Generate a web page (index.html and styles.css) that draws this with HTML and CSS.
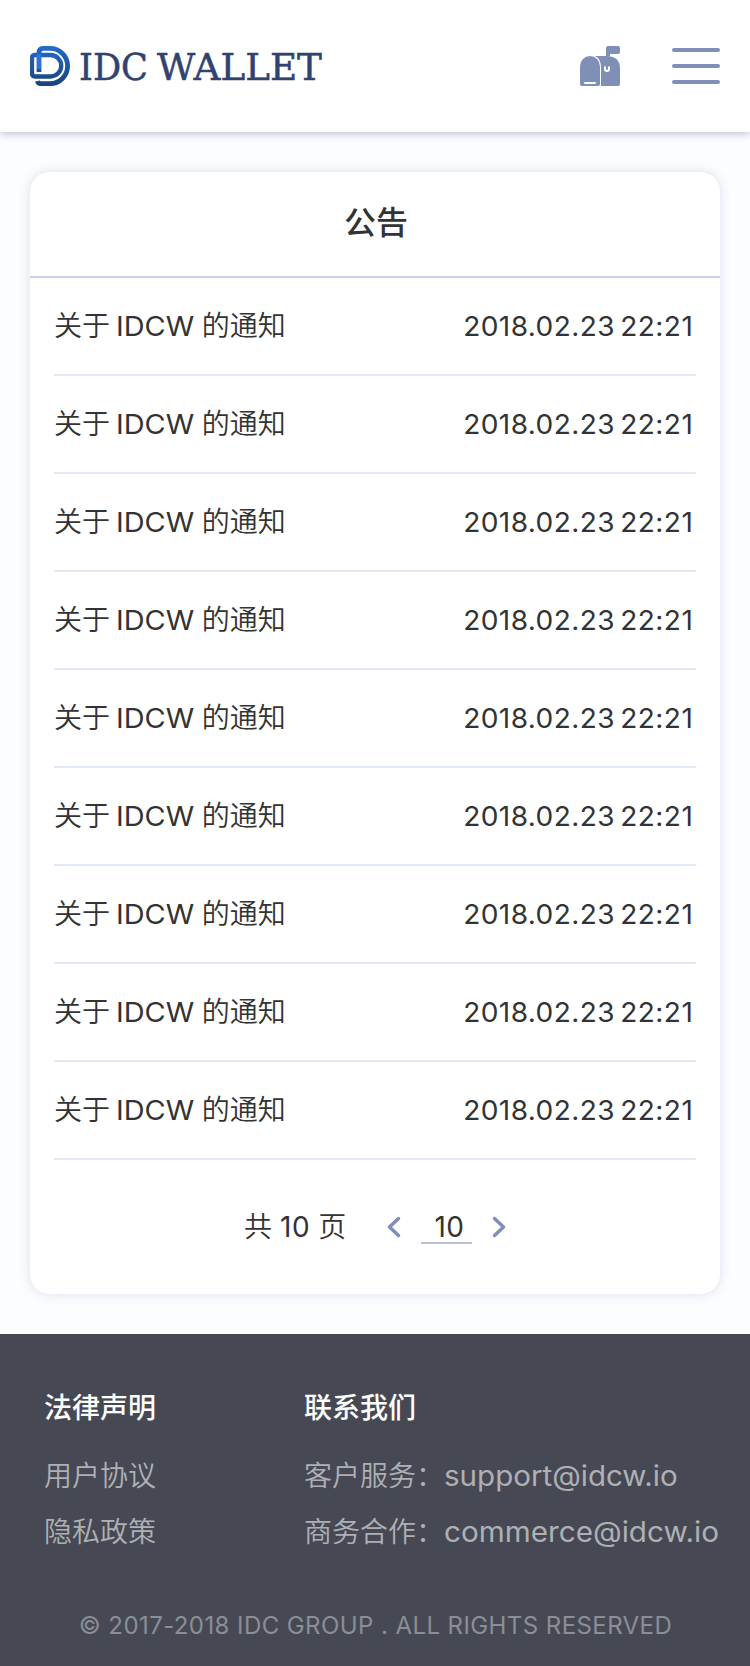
FILE: index.html
```html
<!DOCTYPE html>
<html lang="zh-CN">
<head>
<meta charset="utf-8">
<title>IDC WALLET</title>
<link rel="stylesheet" href="styles.css">
</head>
<body>
<header class="topbar">
  <svg class="brand" width="296" height="44" viewBox="0 0 296 44">
    <defs><linearGradient id="g" gradientUnits="userSpaceOnUse" x1="0" y1="2" x2="0" y2="42"><stop offset="0" stop-color="#246bca"/><stop offset="1" stop-color="#1a427b"/></linearGradient></defs>
    <g fill="none" stroke="url(#g)" stroke-width="4.300">
      <path stroke-width="4.800" d="M9 28V8.400Q9 4.400 13 4.400H20A17.600 17.600 0 0 1 20 39.600H11Q8 39.600 7.500 37"/>
      <path d="M16 11H5Q2 11 2 14V29Q2 32.500 5.500 32.500H20.500A10.750 10.750 0 0 0 20.500 11H14"/>
    </g>
    <path d="M7 10h4v15H7z" fill="#2d73db"/>
    <g class="brand-name">
      <text x="49" y="35.500" textLength="69" lengthAdjust="spacingAndGlyphs">IDC</text>
      <text x="127" y="35.500" textLength="165" lengthAdjust="spacingAndGlyphs">WALLET</text>
    </g>
  </svg>
  <div class="actions">
    <svg width="40" height="40" viewBox="0 0 40 40">
      <path d="M28 10V0H38Q40 0 40 2V6Q40 8 38 8H28V10Q40 11 40 22V38Q40 40 38 40H21V21Q21 13 15 10H26V2Q26 0 28 0H30V10Z" fill="#7e8fb8"/>
      <path d="M0 20.500A10 10.500 0 0 1 20 20.500V38Q20 40 18 40H2Q0 40 0 38Z" fill="#7e8fb8"/>
      <path d="M5 37H15" stroke="#fff" stroke-width="2" stroke-linecap="round"/>
      <path d="M25 20.500V23A2 2 0 0 0 29 23V20.500" fill="none" stroke="#fff" stroke-width="2"/>
    </svg>
    <svg width="48" height="36" viewBox="0 0 48 36"><path d="M2 2H46M2 18H46M2 34H46" stroke="#7e8fb8" stroke-width="4" stroke-linecap="round"/></svg>
  </div>
</header>
<main class="card">
  <h1 class="card-title">公告</h1>
  <ul class="list">
    <li class="row"><span>关于 <span class="code">IDCW</span> 的通知</span><time class="date">2018.02.23 22:21</time></li>
    <li class="row"><span>关于 <span class="code">IDCW</span> 的通知</span><time class="date">2018.02.23 22:21</time></li>
    <li class="row"><span>关于 <span class="code">IDCW</span> 的通知</span><time class="date">2018.02.23 22:21</time></li>
    <li class="row"><span>关于 <span class="code">IDCW</span> 的通知</span><time class="date">2018.02.23 22:21</time></li>
    <li class="row"><span>关于 <span class="code">IDCW</span> 的通知</span><time class="date">2018.02.23 22:21</time></li>
    <li class="row"><span>关于 <span class="code">IDCW</span> 的通知</span><time class="date">2018.02.23 22:21</time></li>
    <li class="row"><span>关于 <span class="code">IDCW</span> 的通知</span><time class="date">2018.02.23 22:21</time></li>
    <li class="row"><span>关于 <span class="code">IDCW</span> 的通知</span><time class="date">2018.02.23 22:21</time></li>
    <li class="row"><span>关于 <span class="code">IDCW</span> 的通知</span><time class="date">2018.02.23 22:21</time></li>
  </ul>
  <nav class="pager">
    <span class="total">共 <span class="num">10</span> 页</span>
    <svg class="chev" width="14" height="22" viewBox="0 0 14 22"><path d="M11.500 2.500L2.500 11L11.500 19.500"/></svg>
    <span class="page">10</span>
    <svg class="chev" width="14" height="22" viewBox="0 0 14 22"><path d="M2.500 2.500L11.500 11L2.500 19.500"/></svg>
  </nav>
</main>
<footer class="footer">
  <div class="cols">
    <section>
      <h2 class="foot-title">法律声明</h2>
      <p class="foot-line">用户协议</p>
      <p class="foot-line">隐私政策</p>
    </section>
    <section>
      <h2 class="foot-title">联系我们</h2>
      <p class="foot-line">客户服务：<span class="mail support">support@idcw.io</span></p>
      <p class="foot-line">商务合作：<span class="mail commerce">commerce@idcw.io</span></p>
    </section>
  </div>
  <p class="copy">© 2017-2018 IDC GROUP . ALL RIGHTS RESERVED</p>
</footer>
</body>
</html>
```
FILE: styles.css
```css
* { box-sizing: border-box; margin: 0; padding: 0; }
body {
  width: 750px;
  height: 1666px;
  display: flex;
  flex-direction: column;
  background: #fcfdff;
  color: #333;
  font: 28px/40px Inter, "Noto Sans CJK SC", sans-serif;
}
svg { display: block; flex: none; }
.topbar {
  height: 132px;
  padding: 0 30px;
  display: flex;
  align-items: center;
  justify-content: space-between;
  background: #fff;
  box-shadow: 0 2px 8px rgba(70, 90, 140, .35);
}
.brand-name { font: 37px "DejaVu Serif", serif; fill: #30426f; stroke: #30426f; stroke-width: .5px; }
.actions { display: flex; align-items: center; gap: 52px; }
.card {
  height: 1122px;
  margin: 40px 30px;
  background: #fff;
  border-radius: 20px;
  box-shadow: 0 0 12px rgba(90, 100, 160, .2);
}
.card-title {
  height: 106px;
  padding: 31px 0 0 2px;
  border-bottom: 2px solid #c7d1eb;
  text-align: center;
  font-size: 32px;
  font-weight: 500;
}
.list { list-style: none; padding: 0 24px; }
.row {
  height: 98px;
  display: flex;
  align-items: center;
  justify-content: space-between;
  border-bottom: 2px solid #e3e8f8;
  font-weight: 350;
  white-space: nowrap;
}
.code, .date, .num, .page, .mail { font-weight: 400; }
.code, .date { font-size: 27px; }
.code {
  display: inline-block;
  margin: 0 5px 0 -2px;
  transform: scaleX(1.07);
  transform-origin: left;
}
.date {
  margin: 2px 3px 0 0;
  letter-spacing: .4px;
  word-spacing: -3px;
  transform: scaleX(1.04);
  transform-origin: right;
}
.pager {
  height: 134px;
  padding: 0 214px;
  display: flex;
  align-items: center;
}
.total { width: 146px; white-space: nowrap; font-weight: 350; }
.num { letter-spacing: .7px; }
.page {
  width: 52px;
  height: 34px;
  line-height: 34px;
  margin: 0 20px;
  border-bottom: 2px solid #b8c1d8;
  text-align: center;
  padding-left: 6px;
  letter-spacing: .5px;
}
.chev path { fill: none; stroke: #7e8fb8; stroke-width: 3.500; stroke-linecap: round; stroke-linejoin: round; }
.footer { flex: 1; padding: 54px 0 0 44px; background: #464954; }
.cols { display: grid; grid-template-columns: 260px 1fr; white-space: nowrap; }
.foot-title { margin-bottom: 20px; line-height: 40px; font-size: 28px; font-weight: 500; color: #fff; }
.foot-line { height: 56px; line-height: 56px; font-weight: 350; color: #aeb0b4; }
.mail { display: inline-block; transform-origin: left; }
.support { transform: scaleX(1.055); }
.commerce { transform: scaleX(1.06); }
.copy { margin: 46px 43px 0 0; text-align: center; font-size: 24px; letter-spacing: .42px; color: #8b8e95; white-space: nowrap; }
```
